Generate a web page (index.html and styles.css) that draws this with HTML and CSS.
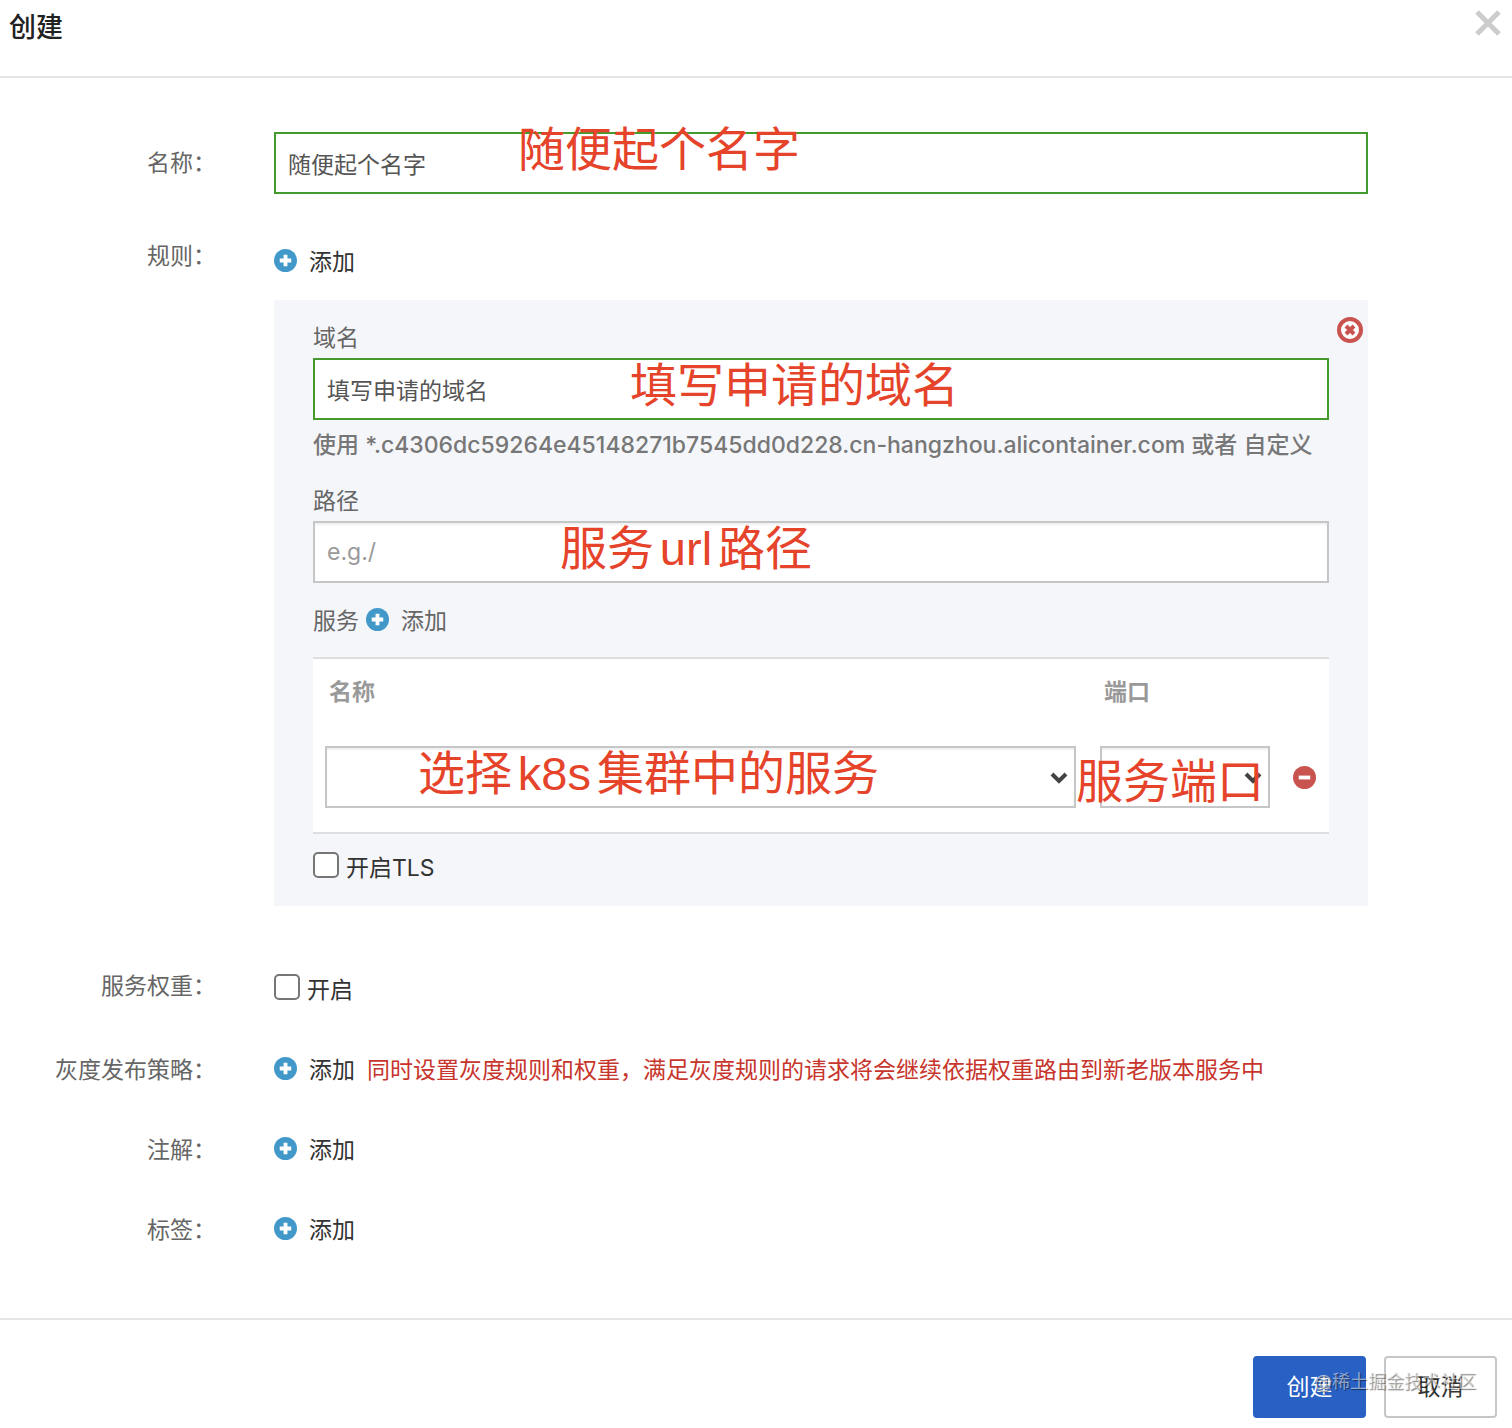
FILE: index.html
```html
<!DOCTYPE html>
<html lang="zh-CN">
<head>
    <meta charset="UTF-8">
    <meta name="viewport" content="width=device-width, initial-scale=1.0">
    <title>创建</title>
    <link rel="stylesheet" href="styles.css">
</head>
<body>
    <svg class="defs" aria-hidden="true">
        <symbol id="icoPlus" viewBox="0 0 24 24">
            <circle cx="12" cy="12" r="12" fill="#4298c8"/>
            <path d="M12 6v12M6 12h12" stroke="#fff" stroke-width="4"/>
        </symbol>
    </svg>

    <div class="modal-header">
        <h3>创建</h3>
        <button type="button" class="icon-btn" aria-label="关闭">
            <svg width="28" height="28" viewBox="0 0 28 28"><path d="M3 3l22 22M25 3L3 25" stroke="#ccc" stroke-width="5"/></svg>
        </button>
    </div>

    <form class="modal-body">
        <div class="row">
            <label class="row-label" for="inpName">名称：</label>
            <div class="field">
                <input type="text" class="inp valid" id="inpName" value="随便起个名字">
                <span class="note note-name">随便起个名字</span>
            </div>
        </div>

        <div class="row row-rule">
            <span class="row-label">规则：</span>
            <div>
                <button type="button" class="btn-add btn-rule"><svg class="ico"><use href="#icoPlus"/></svg>添加</button>
                <div class="panel">
                    <button type="button" class="icon-btn panel-close" aria-label="删除规则">
                        <svg width="28" height="28" viewBox="0 0 28 28">
                            <circle cx="14" cy="14" r="11" fill="#fff" stroke="#c9534f" stroke-width="4"/>
                            <path d="M10 10l8 8M18 10l-8 8" stroke="#c9534f" stroke-width="4"/>
                        </svg>
                    </button>

                    <label class="line" for="inpHost">域名</label>
                    <div class="field">
                        <input type="text" class="inp valid" id="inpHost" value="填写申请的域名">
                        <span class="note note-host">填写申请的域名</span>
                    </div>
                    <p class="hint">使用 *.c4306dc59264e45148271b7545dd0d228.cn-hangzhou.alicontainer.com 或者 自定义</p>

                    <label class="line" for="inpPath">路径</label>
                    <div class="field">
                        <input type="text" class="inp" id="inpPath" placeholder="e.g./">
                        <span class="note note-path">服务url路径</span>
                    </div>

                    <div class="service">
                        <span>服务</span>
                        <button type="button" class="btn-add"><svg class="ico"><use href="#icoPlus"/></svg>添加</button>
                    </div>
                    <table>
                        <thead>
                            <tr>
                                <th>名称</th>
                                <th class="col-port">端口</th>
                                <th class="col-del"></th>
                            </tr>
                        </thead>
                        <tbody>
                            <tr>
                                <td>
                                    <div class="field">
                                        <select class="inp" aria-label="名称"><option></option></select>
                                        <svg class="arrow" viewBox="0 0 18 12"><path d="M2 2l7 7 7-7" fill="none" stroke="#444" stroke-width="4"/></svg>
                                        <span class="note note-service">选择k8s集群中的服务</span>
                                    </div>
                                </td>
                                <td>
                                    <div class="field">
                                        <select class="inp" aria-label="端口"><option></option></select>
                                        <svg class="arrow" viewBox="0 0 18 12"><path d="M2 2l7 7 7-7" fill="none" stroke="#444" stroke-width="4"/></svg>
                                        <span class="note note-port">服务端口</span>
                                    </div>
                                </td>
                                <td class="col-del">
                                    <button type="button" class="icon-btn" aria-label="删除服务">
                                        <svg class="ico" viewBox="0 0 24 24"><circle cx="12" cy="12" r="12" fill="#c9534f"/><path d="M6 12h12" stroke="#fff" stroke-width="4"/></svg>
                                    </button>
                                </td>
                            </tr>
                        </tbody>
                    </table>
                    <label class="check"><input type="checkbox"><span>开启TLS</span></label>
                </div>
            </div>
        </div>

        <div class="row row-weight">
            <span class="row-label">服务权重：</span>
            <label class="check"><input type="checkbox"><span>开启</span></label>
        </div>
        <div class="row">
            <span class="row-label">灰度发布策略：</span>
            <div class="inline">
                <button type="button" class="btn-add"><svg class="ico"><use href="#icoPlus"/></svg>添加</button>
                <span class="warn">同时设置灰度规则和权重，满足灰度规则的请求将会继续依据权重路由到新老版本服务中</span>
            </div>
        </div>
        <div class="row">
            <span class="row-label">注解：</span>
            <button type="button" class="btn-add"><svg class="ico"><use href="#icoPlus"/></svg>添加</button>
        </div>
        <div class="row">
            <span class="row-label">标签：</span>
            <button type="button" class="btn-add"><svg class="ico"><use href="#icoPlus"/></svg>添加</button>
        </div>
    </form>

    <div class="modal-footer">
        <button type="button" class="btn btn-primary">创建</button>
        <button type="button" class="btn">取消</button>
        <span class="watermark">@稀土掘金技术社区</span>
    </div>
</body>
</html>
```
FILE: styles.css
```css
* {
    box-sizing: border-box;
}
body {
    margin: 0;
    background-color: #fff;
    color: #333;
    font-family: Inter, "Noto Sans CJK SC", sans-serif;
    font-size: 23px;
    line-height: 40px;
}
button, input, select {
    font: inherit;
    color: inherit;
}
button {
    padding: 0;
    border: none;
    background: none;
    cursor: pointer;
}
svg {
    display: block;
}
.defs {
    position: absolute;
    width: 0;
    height: 0;
}
.icon-btn {
    display: block;
}
.modal-header {
    display: flex;
    justify-content: space-between;
    align-items: flex-start;
    height: 78px;
    padding: 8px 10px 0 9px;
    border-bottom: 2px solid #e5e5e5;
}
.modal-header h3 {
    margin: 0;
    font-size: 27px;
    font-weight: 500;
    color: #222;
}
.modal-header .icon-btn {
    padding-top: 1px;
}
.modal-body {
    display: flex;
    flex-direction: column;
    gap: 40px;
    padding: 54px 144px 68px 0;
}
.row {
    display: grid;
    grid-template-columns: 216px minmax(0, 1fr);
    column-gap: 58px;
    align-items: center;
}
.row-rule {
    align-items: start;
    margin-top: 2px;
}
.row-weight {
    align-items: start;
    margin-top: 20px;
}
.row-label {
    text-align: right;
    color: #666;
}
.field {
    position: relative;
}
.inp {
    display: block;
    width: 100%;
    height: 62px;
    padding: 0 12px;
    border: 2px solid #c4c6c8;
    border-radius: 0;
    background-color: #fff;
    color: #555;
    box-shadow: inset 0 2px 2px rgba(0, 0, 0, 0.06);
    outline: none;
    appearance: none;
}
.inp.valid {
    border-color: #459a2e;
    box-shadow: none;
}
.inp::placeholder {
    color: #999;
}
.btn-add {
    display: flex;
    align-items: center;
    gap: 12px;
}
.btn-rule {
    margin: 6px 0 18px;
}
.ico {
    width: 23px;
    height: 23px;
}
.btn-add .ico {
    margin-bottom: 3px;
}

/* red remarks written over the fields */
.note {
    position: absolute;
    font-family: "Liberation Sans", "Noto Sans CJK SC", sans-serif;
    font-size: 47px;
    line-height: 60px;
    color: #e5432a;
    white-space: nowrap;
    text-autospace: normal;
    pointer-events: none;
}
.note-name {
    top: -12px;
    left: 244px;
}
.note-host {
    top: -2px;
    left: 317px;
}
.note-path {
    top: -2px;
    left: 247px;
}
.note-service {
    top: -2px;
    left: 93px;
}
.note-port {
    top: 6px;
    left: -24px;
}

.panel {
    position: relative;
    padding: 18px 39px;
    background-color: #f5f6fa;
    color: #666;
}
.panel-close {
    position: absolute;
    top: 16px;
    right: 4px;
}
.line {
    display: block;
}
.hint {
    margin: 5px 0 16px;
    font-weight: 500;
    color: #777;
    white-space: nowrap;
}
.service {
    display: flex;
    gap: 7px;
    margin: 18px 0 16px;
}
table {
    width: 100%;
    table-layout: fixed;
    border-collapse: collapse;
    border-top: 2px solid #dcdee0;
    border-bottom: 2px solid #dcdee0;
    background-color: #fff;
}
th {
    height: 66px;
    padding: 0 16px;
    text-align: left;
    font-weight: 700;
    color: #999;
}
td {
    padding: 22px 12px 24px;
}
.col-port {
    width: 194px;
}
.col-del {
    width: 47px;
    padding-left: 11px;
}
.arrow {
    position: absolute;
    top: 26px;
    right: 8px;
    width: 18px;
    height: 12px;
    pointer-events: none;
}
.check {
    display: flex;
    align-items: center;
    gap: 7px;
    color: #333;
}
.panel .check {
    margin-top: 14px;
}
.row-weight .check {
    padding-top: 4px;
}
.check input {
    width: 26px;
    height: 26px;
    margin: 0 0 7px;
    border: 2px solid #767676;
    border-radius: 5px;
    background-color: #fff;
    appearance: none;
}
.check input:checked {
    background-color: #2860c4;
}
.inline {
    display: flex;
    gap: 12px;
}
.warn {
    color: #c7352c;
    white-space: nowrap;
}
.modal-footer {
    position: relative;
    display: flex;
    justify-content: flex-end;
    gap: 18px;
    padding: 36px 15px 10px;
    border-top: 2px solid #e5e5e5;
}
.btn {
    width: 113px;
    height: 62px;
    border: 2px solid #c4c6c8;
    border-radius: 4px;
    background-color: #fff;
}
.btn-primary {
    border-color: #2860c4;
    background-color: #2860c4;
    color: #fff;
}
.watermark {
    position: absolute;
    top: 42px;
    right: 36px;
    font-size: 18px;
    color: rgba(255, 255, 255, 0.5);
    text-shadow: 1px 1px 1px rgba(0, 0, 0, 0.5);
    pointer-events: none;
}
```
